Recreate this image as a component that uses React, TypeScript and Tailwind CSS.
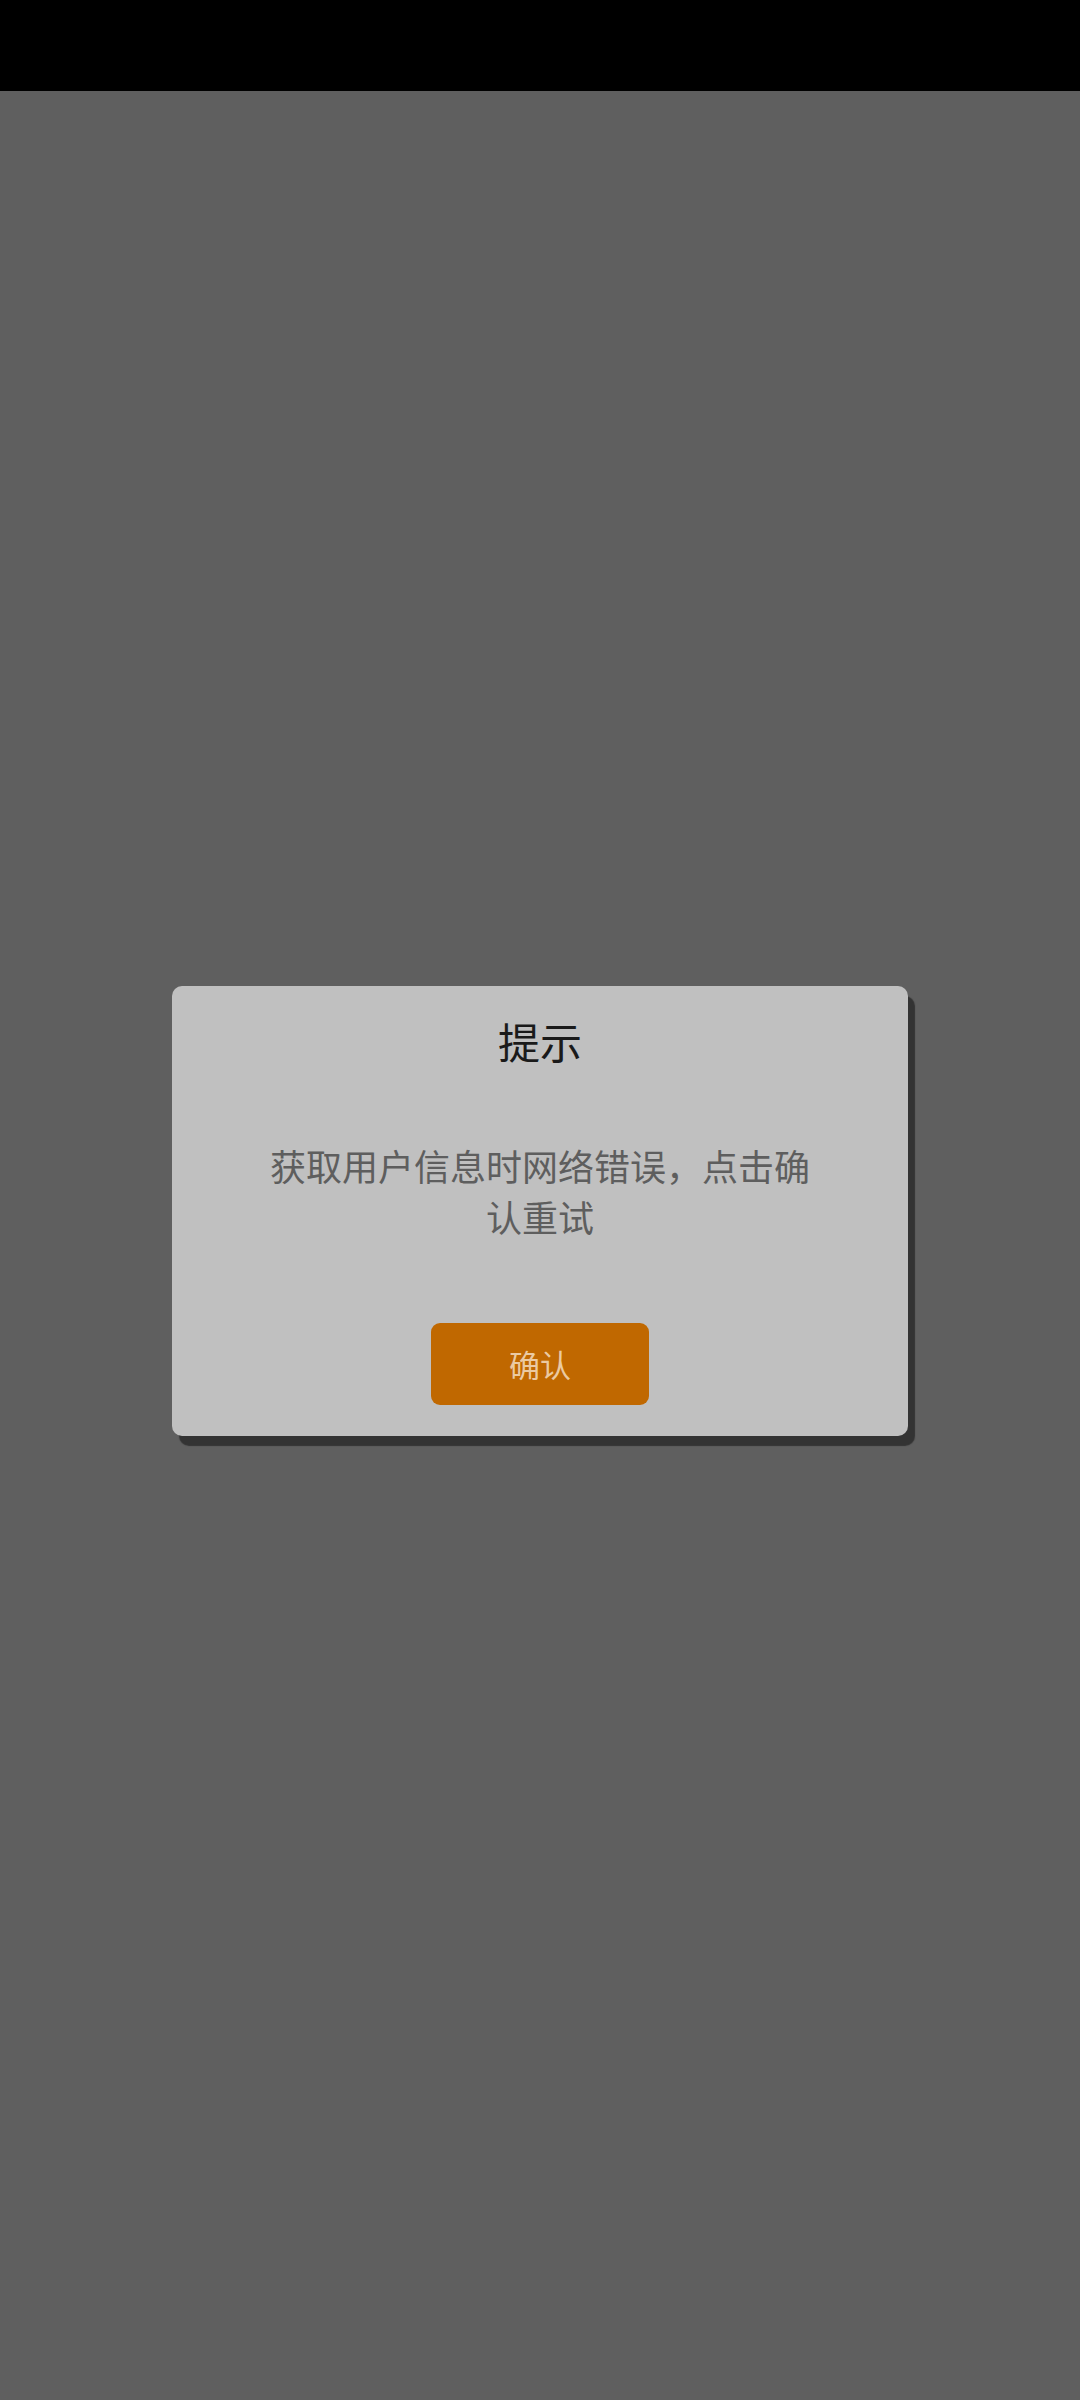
import React from "react";

export default function App() {
  return (
    <div
      className="w-[1080px] h-[2400px] bg-[#5f5f5f] flex flex-col"
      style={{ fontFamily: '"Noto Sans CJK SC", "Noto Sans", sans-serif' }}
    >
      <div className="h-[91px] w-full bg-black shrink-0" />
      <div className="flex justify-center pt-[895px]">
        <div className="w-[736px] h-[450px] bg-[#c0c0c0] rounded-[10px] shadow-[7px_10px_1px_#333333] flex flex-col items-center pt-[27px]">
          <div className="text-[42px] leading-[56px] text-[#1a1a1a]">提示</div>
          <div className="mt-[71px] w-[556px] text-center text-[36px] leading-[51px] text-[#5e5e5e]">
            获取用户信息时网络错误，点击确认重试
          </div>
          <button className="mt-[81px] w-[218px] h-[82px] rounded-[9px] bg-[#c06800] text-[31px] text-[#ebcaa2] flex items-center justify-center">
            确认
          </button>
        </div>
      </div>
    </div>
  );
}
